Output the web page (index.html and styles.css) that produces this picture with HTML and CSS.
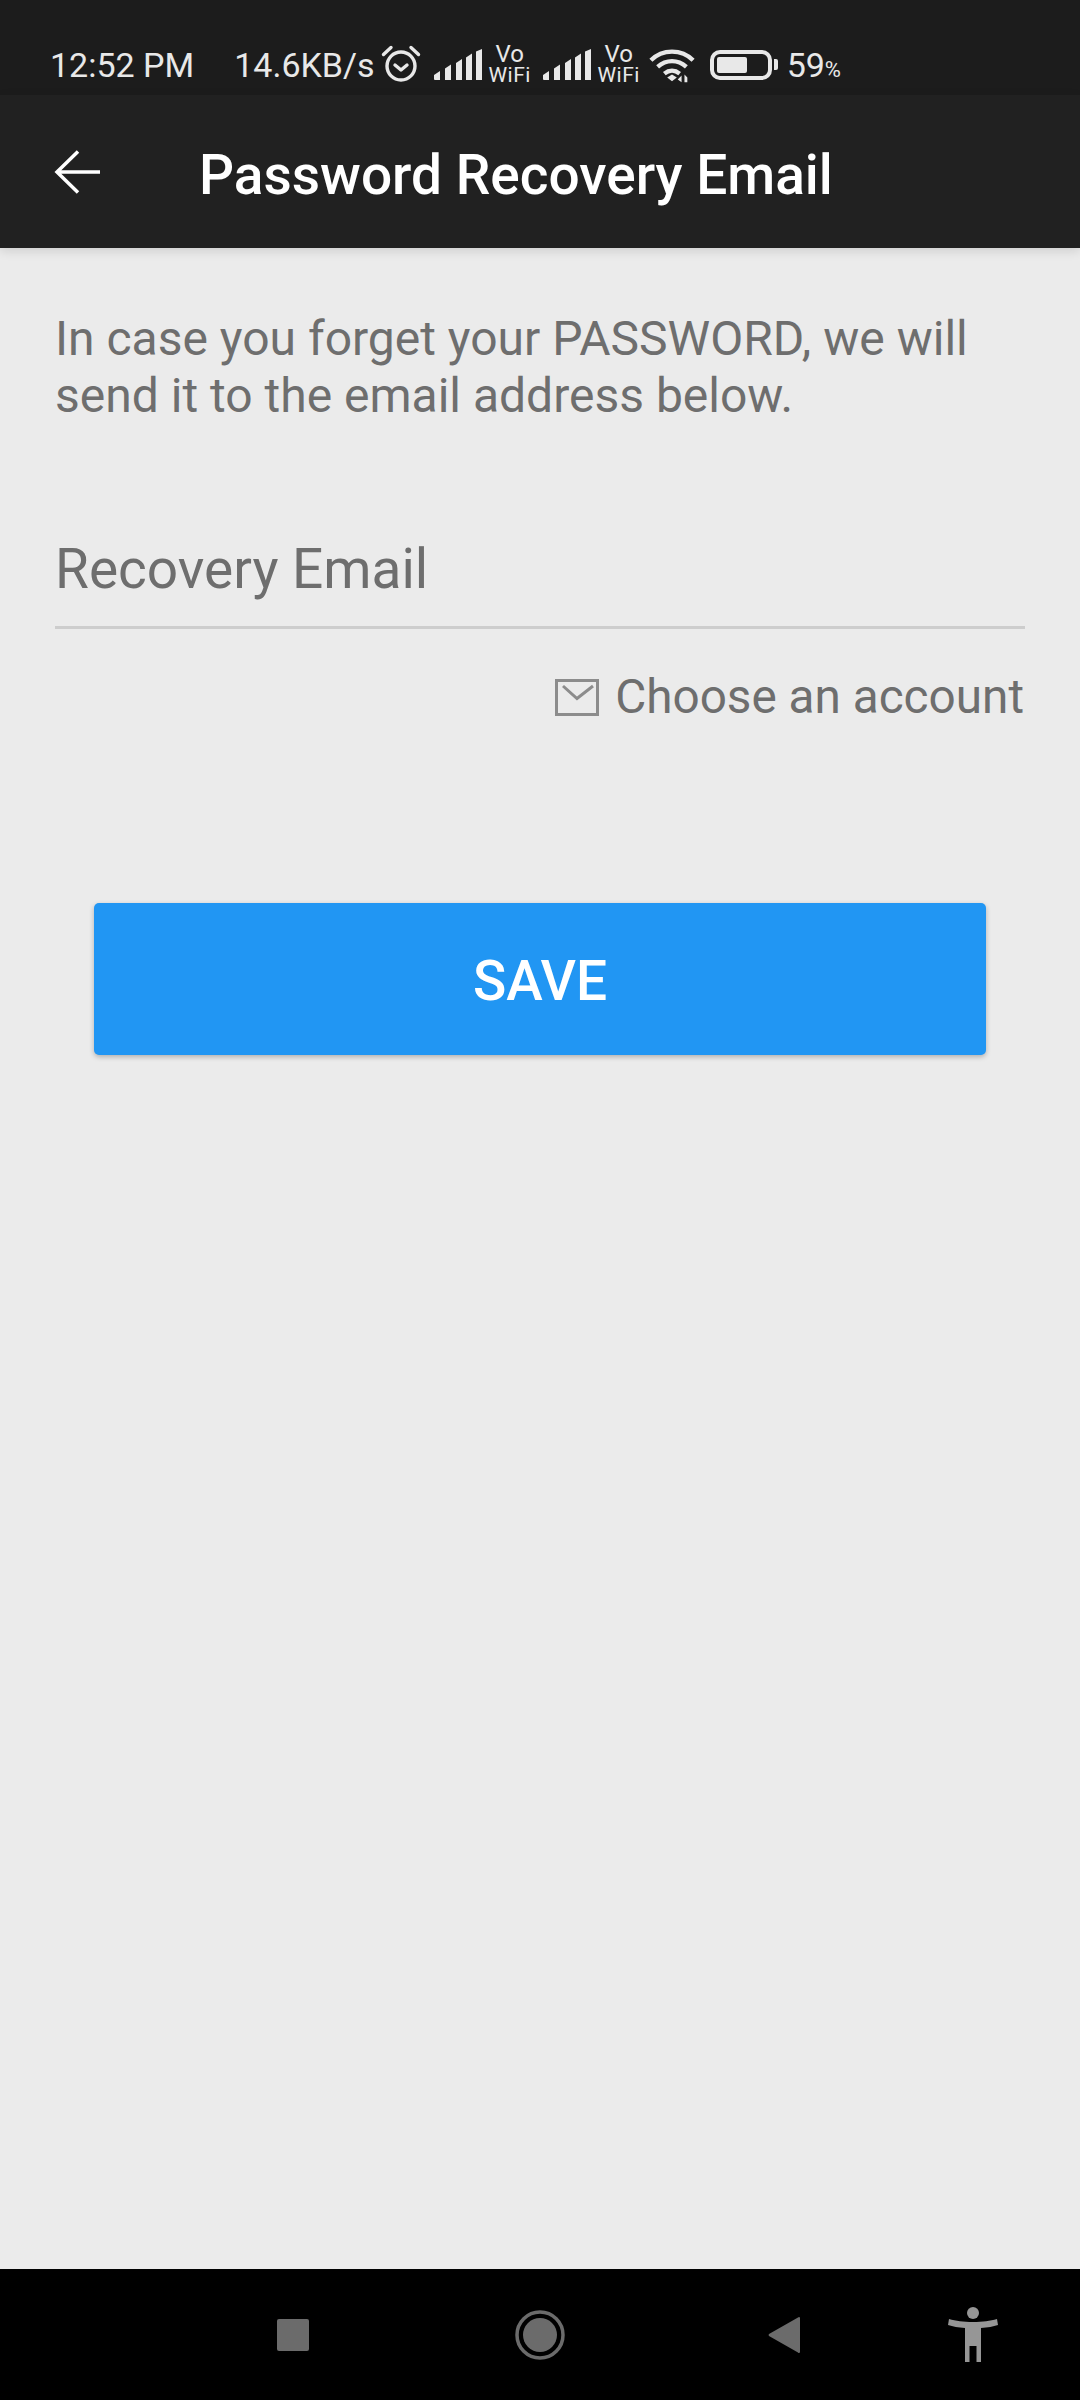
FILE: index.html
```html
<!DOCTYPE html>
<html lang="en">
<head>
  <meta charset="UTF-8">
  <meta name="viewport" content="width=device-width, initial-scale=1.0">
  <title>Password Recovery Email</title>
  <link rel="stylesheet" href="styles.css">
</head>
<body>
  <!-- Status bar -->
  <div class="status-bar">
    <span class="clock">12:52 PM</span>
    <span class="speed">14.6KB/s</span>
    <svg class="ic-alarm" width="40" height="37" viewBox="0 0 40 37" fill="none" stroke="#e8e8e8" stroke-width="3.4">
      <circle cx="20" cy="21" r="14"/>
      <path d="M14 20l6 5 6-5" stroke-linecap="round" stroke-linejoin="round"/>
      <path d="M2.500 9.500l7.500-7M37.500 9.500l-7.500-7" stroke-linecap="round"/>
    </svg>
    <svg class="ic-signal" width="48" height="31" viewBox="0 0 48 31" fill="#e8e8e8">
      <path d="M0 26l6-4v9H1a1 1 0 0 1-1-1zM11 19.500l6-4V31h-6zM22 14l6-4v21h-6zM32 8.500l6-4V31h-6zM42 2.500l6-2.500v31h-6z"/>
    </svg>
    <span class="vowifi"><span class="vo">Vo</span><span class="wf">WiFi</span></span>
    <svg class="ic-signal" width="48" height="31" viewBox="0 0 48 31" fill="#e8e8e8">
      <path d="M0 26l6-4v9H1a1 1 0 0 1-1-1zM11 19.500l6-4V31h-6zM22 14l6-4v21h-6zM32 8.500l6-4V31h-6zM42 2.500l6-2.500v31h-6z"/>
    </svg>
    <span class="vowifi"><span class="vo">Vo</span><span class="wf">WiFi</span></span>
    <svg class="ic-wifi" width="46" height="36" viewBox="0 0 48 36" fill="none" stroke="#e8e8e8" stroke-width="4.500">
      <path d="M2 13C14 1 34 1 46 13"/>
      <path d="M9 20c9-8 21-8 30 0"/>
      <path d="M16 27c5-4 11-4 16 0"/>
      <path d="M19 31l5-3 5 3-5 4z" fill="#e8e8e8" stroke="none"/>
      <path d="M34 36v-7l-4 4zM37 28v8h3v-5z" fill="#e8e8e8" stroke="none"/>
    </svg>
    <div class="battery"><div class="battery-fill"></div></div>
    <div class="battery-tip"></div>
    <span class="percent">59<small>%</small></span>
  </div>

  <!-- App bar -->
  <header class="app-bar">
    <svg class="ic-back" width="46" height="44" viewBox="0 0 46 44" fill="none" stroke="#fff" stroke-width="3.500">
      <path d="M46 22H3M24 1.500L3 22 24 42.500"/>
    </svg>
    <h1>Password Recovery Email</h1>
  </header>

  <main class="content">
    <p class="intro">In case you forget your PASSWORD, we will send it to the email address below.</p>

    <div class="field">Recovery Email</div>

    <div class="choose">
      <svg width="44" height="37" viewBox="0 0 44 37" fill="none" stroke="#8c8c8c" stroke-width="3">
        <rect x="1.500" y="1.500" width="41" height="34"/>
        <path d="M8 7l14 12.500L38 7"/>
      </svg>
      <span>Choose an account</span>
    </div>

    <button class="save">SAVE</button>
  </main>

  <!-- Navigation bar -->
  <nav class="nav-bar">
    <svg class="nav-square" width="32" height="32" viewBox="0 0 32 32"><rect width="32" height="32" rx="2" fill="#6b6b6b"/></svg>
    <svg class="nav-circle" width="50" height="50" viewBox="0 0 50 50">
      <circle cx="25" cy="25" r="23" fill="none" stroke="#6b6b6b" stroke-width="3.500"/>
      <circle cx="25" cy="25" r="17" fill="#6b6b6b"/>
    </svg>
    <svg class="nav-back" width="32" height="38" viewBox="0 0 32 38"><path d="M31 1a1 1 0 0 1 1 1v34a1 1 0 0 1-1 1 1 1 0 0 1-1-.5L1 20a1.500 1.500 0 0 1 0-2L30 1.500z" fill="#6b6b6b"/></svg>
    <svg class="nav-person" width="50" height="55" viewBox="0 0 50 55" fill="#969696">
      <ellipse cx="25" cy="6" rx="6" ry="6"/>
      <path d="M1 12c7 2 14 3 24 3s17-1 24-3l1 6c-5 1.500-10 2.500-17 3V55h-4.500V39h-7v16H17V21C10 20.500 5 19.500 0 18z"/>
    </svg>
  </nav>
</body>
</html>
```

FILE: styles.css
```css
* {
  box-sizing: border-box;
}

body {
  margin: 0;
  width: 1080px;
  height: 2400px;
  display: flex;
  flex-direction: column;
  overflow: hidden;
  font-family: Roboto, "Liberation Sans", sans-serif;
  background: #ebebeb;
}

.status-bar {
  height: 95px;
  flex-shrink: 0;
  display: flex;
  align-items: center;
  padding: 34px 0 0 50px;
  background: #1c1c1c;
  color: #e8e8e8;
  font-size: 34px;
}

.clock {
  margin-right: 40px;
}

.speed {
  margin-right: 6px;
}

.ic-alarm {
  margin-bottom: 3px;
}

.ic-signal {
  margin-left: 13px;
  margin-right: 8px;
}

.vowifi {
  display: flex;
  flex-direction: column;
  align-items: center;
  width: 40px;
}

.vo {
  font-size: 24px;
  line-height: 21px;
}

.wf {
  font-size: 21px;
  line-height: 21px;
  letter-spacing: 0.5px;
}

.ic-wifi {
  margin-left: 10px;
  margin-right: 15px;
}

.battery {
  width: 62px;
  height: 30px;
  border: 4px solid #e8e8e8;
  border-radius: 10px;
  padding: 3px;
}

.battery-fill {
  width: 30px;
  height: 16px;
  border-radius: 2px;
  background: #e8e8e8;
}

.battery-tip {
  width: 4px;
  height: 11px;
  margin-left: 2px;
  border-radius: 0 2px 2px 0;
  background: #e8e8e8;
}

.percent {
  margin-left: 9px;
}

.percent small {
  font-size: 22px;
}

.app-bar {
  height: 153px;
  flex-shrink: 0;
  display: flex;
  align-items: center;
  padding-left: 54px;
  background: #212121;
  box-shadow: 0 3px 10px rgba(0, 0, 0, 0.12);
  position: relative;
}

.app-bar h1 {
  margin: 6px 0 0 99px;
  font-size: 55px;
  font-weight: 500;
  color: #fff;
}

.content {
  flex: 1;
  padding: 62px 55px 0;
  display: flex;
  flex-direction: column;
}

.intro {
  margin: 0;
  font-size: 48px;
  line-height: 57px;
  color: #6e6e6e;
}

.field {
  margin-top: 113px;
  height: 92px;
  font-size: 55px;
  line-height: 65px;
  color: #6e6e6e;
  border-bottom: 3px solid #cdcdcd;
}

.choose {
  margin-top: 40px;
  padding-right: 1px;
  display: flex;
  align-items: center;
  justify-content: flex-end;
  gap: 16px;
  font-size: 47.700px;
  color: #6e6e6e;
}

.save {
  margin: 178px 39px 0;
  padding-top: 5px;
  height: 152px;
  border: 0;
  border-radius: 5px;
  background: #2196f3;
  box-shadow: 0 2px 5px rgba(0, 0, 0, 0.25);
  color: #fff;
  font-family: inherit;
  font-size: 55px;
  font-weight: 500;
}

.nav-bar {
  height: 131px;
  flex-shrink: 0;
  display: flex;
  align-items: center;
  padding-left: 277px;
  background: #000;
}

.nav-circle {
  margin-left: 206px;
}

.nav-back {
  margin-left: 203px;
}

.nav-person {
  margin-left: 148px;
}
```
